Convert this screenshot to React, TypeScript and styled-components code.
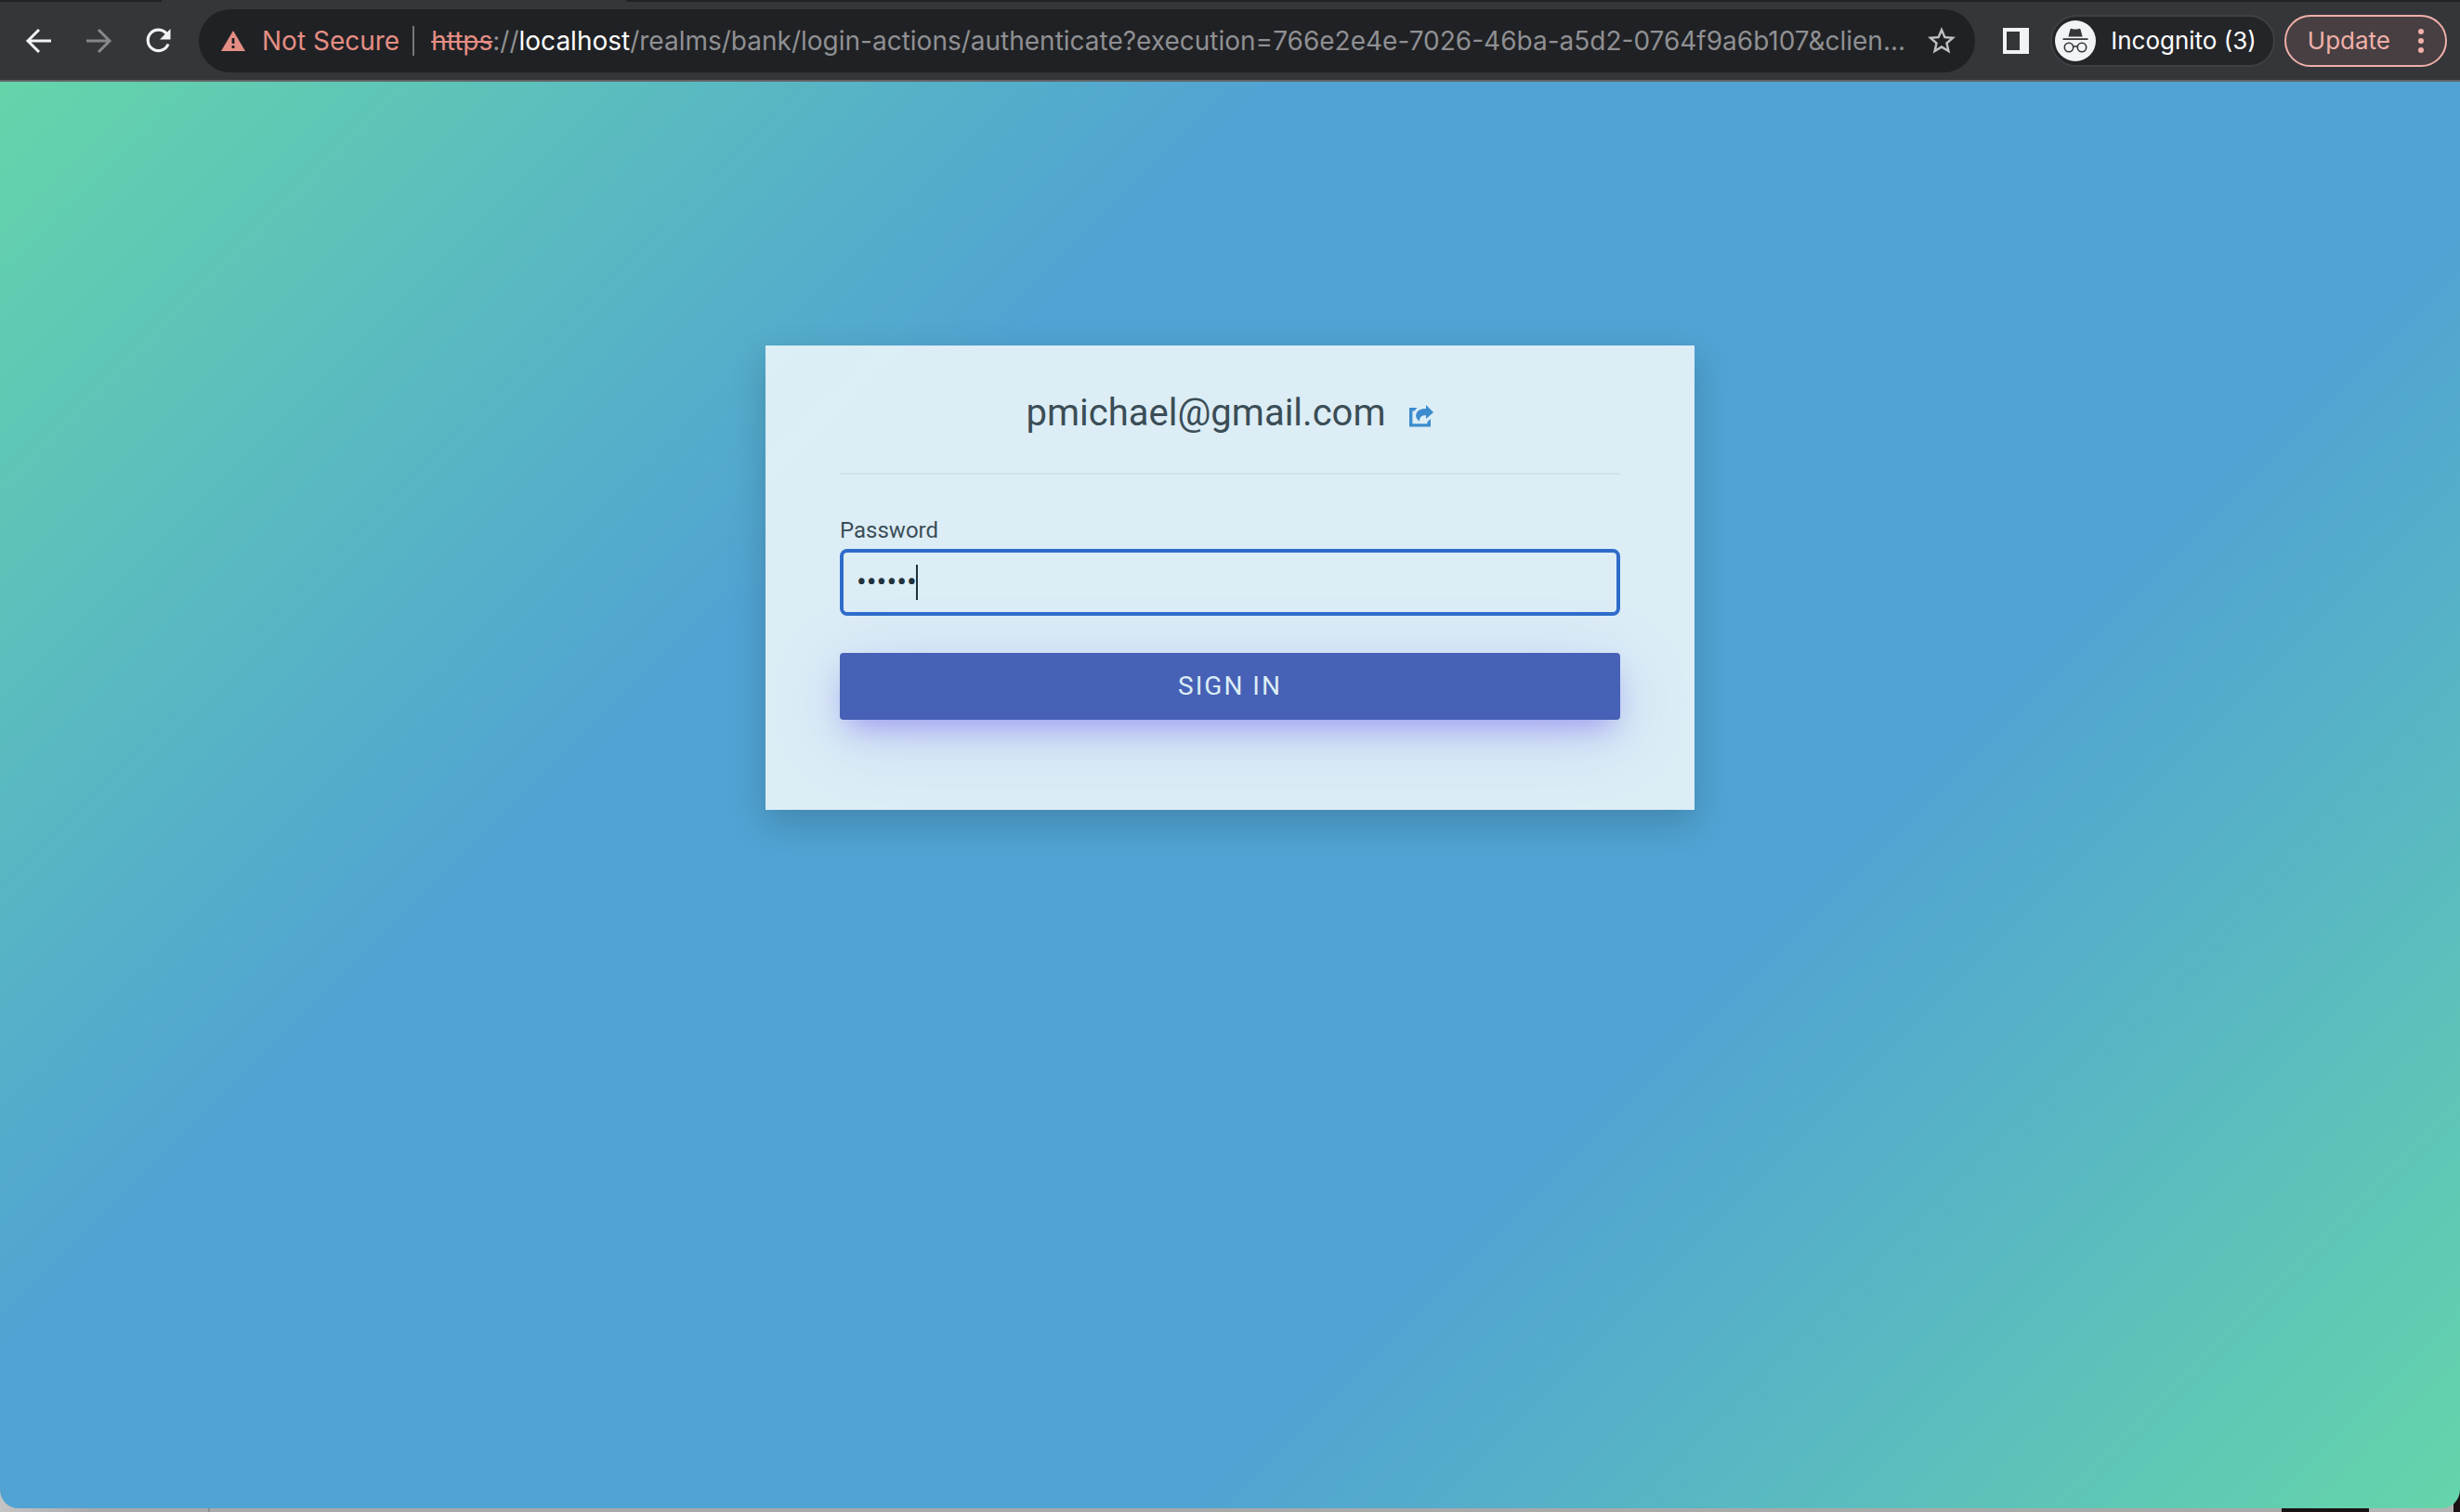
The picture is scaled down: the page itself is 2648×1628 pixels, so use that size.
import React, { useState } from "react";
import styled, { createGlobalStyle, css } from "styled-components";

const GlobalStyle = createGlobalStyle`
  *, *::before, *::after { box-sizing: border-box; }
  body { margin: 0; background: #a9a9a9; }
  button, input { font: inherit; }
`;

const Desktop = styled.div`
  display: flex;
  flex-direction: column;
  min-height: 100vh;
  background: linear-gradient(
    90deg,
    #c4c4c4 0,
    #a9a9a9 100px,
    #a9a9a9 224px,
    #8e8e8e 224px,
    #8e8e8e 226px,
    #a9a9a9 226px,
    #a9a9a9 calc(100% - 192px),
    #1a1214 calc(100% - 192px),
    #1a1214 calc(100% - 98px),
    #b4b4b4 calc(100% - 98px),
    #b4b4b4 calc(100% - 7px),
    #1a1214 calc(100% - 7px)
  );
`;

const Chrome = styled.header`
  font-family: Inter, "Liberation Sans", sans-serif;
  font-size: 28px;
  line-height: 36px;
  background: #35363a;
  border-bottom: 2px solid #636467;
`;

const TabStrip = styled.div`
  display: flex;
  height: 2px;
`;

const StripSegment = styled.div<{ $width?: number; $active?: boolean }>`
  flex: ${(p) => (p.$width ? `0 0 ${p.$width}px` : "1")};
  background: ${(p) => (p.$active ? "#35363a" : "#202124")};
`;

const Toolbar = styled.div`
  display: flex;
  align-items: center;
  padding: 8px 14px 8px 20px;
`;

const bare = css`
  display: inline-flex;
  align-items: center;
  justify-content: center;
  padding: 0;
  border: 0;
  background: transparent;
  cursor: pointer;
`;

const NavGroup = styled.nav`
  display: flex;
  gap: 20px;
  margin-right: 22px;
`;

const IconButton = styled.button<{ $dim?: boolean }>`
  ${bare}
  flex: none;
  width: 44px;
  height: 44px;
  color: ${(p) => (p.$dim ? "#87888b" : "#f1f3f4")};
`;

const AddressBar = styled.div`
  display: flex;
  align-items: center;
  flex: 1;
  min-width: 0;
  height: 68px;
  padding: 0 14px 0 24px;
  border-radius: 34px;
  background: #202124;
`;

const SecurityButton = styled.button`
  ${bare}
  gap: 18px;
  padding-right: 14px;
  border-right: 2px solid #77787b;
  line-height: 32px;
  color: #e58e84;
  white-space: nowrap;
`;

const Address = styled.div`
  flex: 1;
  min-width: 0;
  padding-left: 18px;
  overflow: hidden;
  white-space: nowrap;
  color: #8f9093;
`;

const Scheme = styled.s`
  color: #e58e84;
`;

const Host = styled.span`
  color: #ffffff;
`;

const ToolbarEnd = styled.div`
  display: flex;
  align-items: center;
  margin-left: 22px;
`;

const Pill = styled.button<{ $update?: boolean }>`
  ${bare}
  height: 56px;
  border: 2px solid ${(p) => (p.$update ? "#f0b0a9" : "#3f4044")};
  border-radius: 28px;
  background: ${(p) => (p.$update ? "#473f42" : "#242529")};
  color: ${(p) => (p.$update ? "#f0b0a9" : "#ffffff")};
  font-size: 26px;
  gap: ${(p) => (p.$update ? "30px" : "16px")};
  padding: ${(p) => (p.$update ? "0 23px" : "0 18px 0 3px")};
  margin-left: ${(p) => (p.$update ? "10px" : "15px")};
  white-space: nowrap;
`;

const Page = styled.main`
  flex: 1;
  padding: 284px 24px 64px;
  margin-bottom: 4px;
  border-radius: 0 0 20px 20px;
  background: linear-gradient(135deg, #65d5aa 0%, #50a3d3 33%, #50a3d3 67%, #65d5aa 100%);
  font-family: Roboto, "Liberation Sans", sans-serif;
`;

const Card = styled.section`
  max-width: 1000px;
  margin: 0 auto;
  padding: 49px 80px 97px;
  background: rgba(255, 255, 255, 0.8);
  box-shadow: 0 14px 36px rgba(0, 0, 0, 0.18);
`;

const CardHeader = styled.header`
  display: flex;
  align-items: center;
  justify-content: center;
  gap: 26px;
  height: 90px;
  padding-bottom: 40px;
  border-bottom: 2px solid #d2e2e9;
`;

const Account = styled.h1`
  margin: 0;
  font-size: 40px;
  line-height: 48px;
  font-weight: 400;
  color: #3b4d56;
`;

const RestartLink = styled.a`
  display: inline-flex;
  padding-top: 6px;
  color: #3c8ccd;
`;

const Form = styled.form`
  display: flex;
  flex-direction: column;
`;

const Label = styled.label`
  margin: 44px 0 4px;
  font-size: 24px;
  line-height: 32px;
  color: #3b4d56;
`;

const Field = styled.div`
  position: relative;
`;

const PasswordInput = styled.input`
  display: block;
  width: 100%;
  height: 72px;
  padding: 0 14px 2px;
  border: 4px solid #2f6cca;
  border-radius: 8px;
  outline: 0;
  background: transparent;
  color: #22323b;
  font-size: 32px;
  caret-color: transparent;
`;

const Caret = styled.span`
  position: absolute;
  top: 17px;
  left: 82px;
  width: 2px;
  height: 38px;
  background: #22323b;
`;

const SubmitButton = styled.button`
  height: 72px;
  margin-top: 40px;
  padding: 0 0 2px;
  border: 0;
  border-radius: 4px;
  background: #4661b5;
  box-shadow:
    0 16px 32px -8px rgba(98, 72, 235, 0.42),
    0 16px 80px rgba(98, 110, 235, 0.2);
  color: #dcedf5;
  font-size: 28px;
  letter-spacing: 2px;
  text-transform: uppercase;
  cursor: pointer;
`;

const BackIcon = ({ flip = false }: { flip?: boolean }) => (
  <svg width="36" height="36" viewBox="0 0 36 36" fill="none" stroke="currentColor" strokeWidth="3" aria-hidden="true">
    <path d={flip ? "M5 18H30M18 6L30 18L18 30" : "M31 18H6M18 6L6 18L18 30"} />
  </svg>
);

const ReloadIcon = () => (
  <svg width="36" height="36" viewBox="0 0 36 36" aria-hidden="true">
    <path d="M27.5 10.5A11.3 11.3 0 1 0 29 21.5" fill="none" stroke="currentColor" strokeWidth="3.2" />
    <path d="M31.5 5V16.5H20Z" fill="currentColor" />
  </svg>
);

const WarningIcon = () => (
  <svg width="26" height="22" viewBox="0 0 26 22" aria-hidden="true">
    <path d="M13 0L26 22H0Z" fill="currentColor" />
    <path d="M11.6 8h2.8v6h-2.8zM11.6 16h2.8v3h-2.8z" fill="#202124" />
  </svg>
);

const StarIcon = () => (
  <svg width="36" height="36" viewBox="0 0 24 24" aria-hidden="true">
    <path
      fill="#bfc0c3"
      d="M22 9.24l-7.19-.62L12 2 9.19 8.63 2 9.24l5.46 4.73L5.82 21 12 17.27 18.18 21l-1.63-7.03L22 9.24zM12 15.4l-3.76 2.27 1-4.28-3.32-2.88 4.38-.38L12 6.1l1.71 4.04 4.38.38-3.32 2.88 1 4.28L12 15.4z"
    />
  </svg>
);

const SidePanelIcon = () => (
  <svg width="28" height="28" viewBox="0 0 28 28" aria-hidden="true">
    <path fill="currentColor" fillRule="evenodd" d="M0 0H28V28H0ZM4 4V24H18V4Z" />
  </svg>
);

const IncognitoIcon = () => (
  <svg width="44" height="44" viewBox="0 0 44 44" aria-hidden="true">
    <circle cx="22" cy="22" r="22" fill="#f1f3f4" />
    <path
      d="M16.5 9.6Q16.8 8.4 18.2 8.9Q22 10.1 25.8 8.9Q27.2 8.4 27.5 9.6L29.6 17.5H14.4Z"
      fill="#35363a"
    />
    <path d="M8.5 19.2H35.5V21H8.5Z" fill="#35363a" />
    <g fill="none" stroke="#35363a" strokeWidth="1.6">
      <circle cx="15" cy="29" r="4.7" />
      <circle cx="29" cy="29" r="4.7" />
      <path d="M19.7 28.6Q22 27 24.3 28.6" />
    </g>
  </svg>
);

const DotsIcon = () => (
  <svg width="6" height="26" viewBox="0 0 6 26" fill="currentColor" aria-hidden="true">
    <circle cx="3" cy="3" r="3" />
    <circle cx="3" cy="13" r="3" />
    <circle cx="3" cy="23" r="3" />
  </svg>
);

const ShareIcon = () => (
  <svg width="26" height="24" viewBox="0 0 26 24" fill="currentColor" aria-hidden="true">
    <path d="M0 3H8.5L5.5 6.5H3.4V20.3H19.4V18.2L23 15V23.5H0Z" />
    <path d="M18 0L26 8L18 15V11.2C13.4 11 11 12.8 11 17.5C8.4 16 7.2 14 7.2 11.6C7.2 6.6 11.5 4 18 4Z" />
  </svg>
);

export default function App() {
  const [password, setPassword] = useState("secret");

  return (
    <Desktop>
      <GlobalStyle />
      <Chrome>
        <TabStrip>
          <StripSegment $width={174} />
          <StripSegment $width={500} $active />
          <StripSegment />
        </TabStrip>
        <Toolbar>
          <NavGroup aria-label="History">
            <IconButton aria-label="Back">
              <BackIcon />
            </IconButton>
            <IconButton aria-label="Forward" $dim>
              <BackIcon flip />
            </IconButton>
            <IconButton aria-label="Reload">
              <ReloadIcon />
            </IconButton>
          </NavGroup>
          <AddressBar>
            <SecurityButton>
              <WarningIcon />
              Not Secure
            </SecurityButton>
            <Address>
              <Scheme>https</Scheme>://<Host>localhost</Host>
              /realms/bank/login-actions/authenticate?execution=766e2e4e-7026-46ba-a5d2-0764f9a6b107&amp;clien...
            </Address>
            <IconButton aria-label="Bookmark">
              <StarIcon />
            </IconButton>
          </AddressBar>
          <ToolbarEnd>
            <IconButton aria-label="Side panel">
              <SidePanelIcon />
            </IconButton>
            <Pill>
              <IncognitoIcon />
              Incognito (3)
            </Pill>
            <Pill $update>
              Update
              <DotsIcon />
            </Pill>
          </ToolbarEnd>
        </Toolbar>
      </Chrome>
      <Page>
        <Card>
          <CardHeader>
            <Account>pmichael@gmail.com</Account>
            <RestartLink href="#restart" aria-label="Restart login">
              <ShareIcon />
            </RestartLink>
          </CardHeader>
          <Form onSubmit={(e) => e.preventDefault()}>
            <Label htmlFor="password">Password</Label>
            <Field>
              <PasswordInput
                id="password"
                type="password"
                value={password}
                onChange={(e) => setPassword(e.target.value)}
              />
              <Caret />
            </Field>
            <SubmitButton type="submit">Sign In</SubmitButton>
          </Form>
        </Card>
      </Page>
    </Desktop>
  );
}
